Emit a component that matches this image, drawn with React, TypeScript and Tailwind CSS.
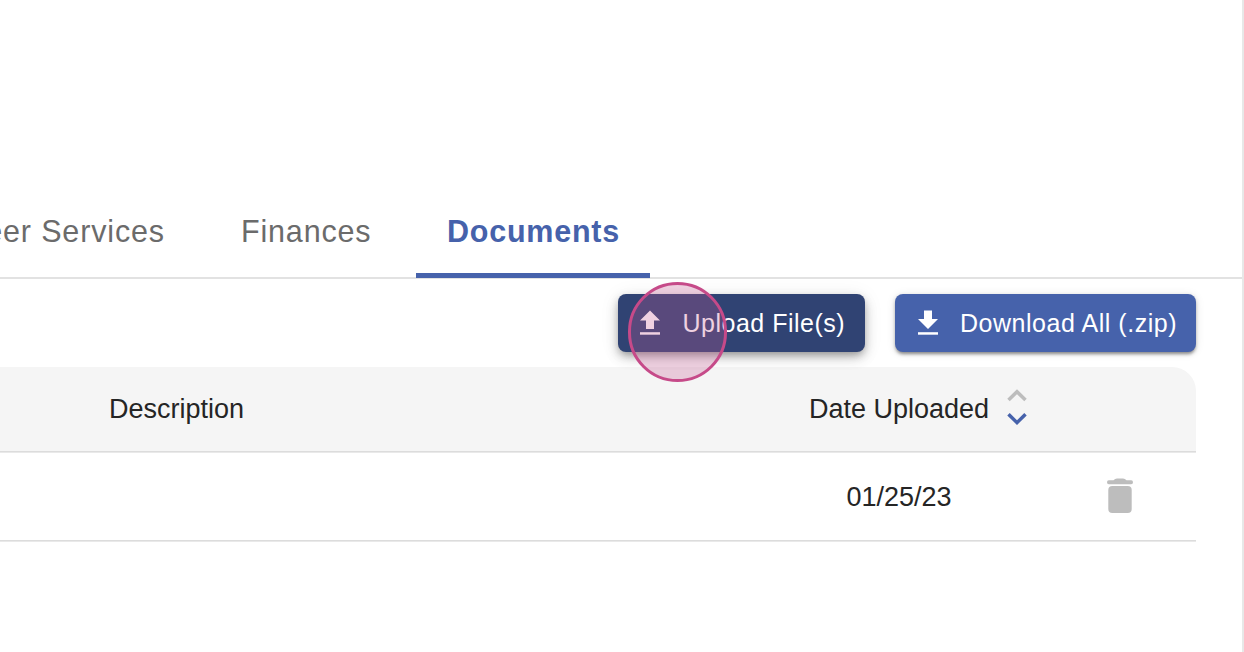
const tabs = [
  { label: "Career Services", active: false },
  { label: "Finances", active: false },
  { label: "Documents", active: true },
];

function Tabs() {
  return (
    <nav className="flex h-[279px] w-full items-end justify-start border-b-2 border-[#e2e2e2]">
      <div className="-ml-[104.5px] flex h-[92px] shrink-0">
        {tabs.map((tab) => (
          <button
            key={tab.label}
            className={
              tab.active
                ? "-mb-px ml-[7px] flex h-[92.5px] w-[234px] shrink-0 items-center justify-center whitespace-nowrap border-b-[5px] border-[#4662ab] pt-[4px] text-[30.5px] font-bold leading-none tracking-[0.75px] text-[#4662ab]"
                : "flex shrink-0 items-center whitespace-nowrap px-[38px] pt-[1px] text-[30.5px] leading-none tracking-[0.85px] text-[#6b6b6b]"
            }
          >
            {tab.label}
          </button>
        ))}
      </div>
    </nav>
  );
}

function TransferIcon({ up }: { up: boolean }) {
  return (
    <svg viewBox="0 0 20 25" className="-mt-[2px] h-[25px] w-5 shrink-0" fill="currentColor">
      <path d={up ? "M6 19V10.5H0L10 0.5L20 10.5H14V19Z" : "M6 0.5V9H0L10 19L20 9H14V0.5Z"} />
      <path d="M0 22.2H20V24.7H0Z" />
    </svg>
  );
}

function Actions() {
  return (
    <div className="flex h-[88px] items-start justify-end gap-[30px] pr-[46px] pt-[15px]">
      <button className="relative flex h-[58px] w-[247px] items-center gap-[22.5px] whitespace-nowrap rounded-[8px] bg-[#304373] pl-[22px] text-[25px] leading-none tracking-[0.5px] text-white shadow-[0_4px_8px_-2px_rgba(0,0,0,0.35),0_6px_14px_rgba(0,0,0,0.14),0_2px_20px_rgba(0,0,0,0.08)]">
        <TransferIcon up />
        <span>Upload File(s)</span>
        <span className="absolute -top-[12px] left-[10px] h-[100px] w-[99px] rounded-full border-[3px] border-[#c64a89] bg-[#c65a95]/28" />
      </button>
      <button className="flex h-[58px] w-[301px] items-center gap-[22px] whitespace-nowrap rounded-[8px] bg-[#4662ab] pl-[23px] text-[25px] leading-none tracking-[0.53px] text-white shadow-[0_3px_3px_-1px_rgba(0,0,0,0.3),0_2px_4px_rgba(0,0,0,0.18),0_1px_10px_rgba(0,0,0,0.1)]">
        <TransferIcon up={false} />
        <span>Download All (.zip)</span>
      </button>
    </div>
  );
}

function SortIcon() {
  return (
    <svg viewBox="0 0 20 38" className="-mt-[5px] ml-[18px] h-[38px] w-5" fill="none" strokeWidth="3.5">
      <path d="M1.5 12L10 3.7L18.5 12" stroke="#bdbdbd" />
      <path d="M1.5 26.3L10 34.6L18.5 26.3" stroke="#4662ab" />
    </svg>
  );
}

function TrashIcon() {
  return (
    <svg viewBox="0 0 28 36" className="-mt-[1px] h-9 w-7" fill="#bdbdbd">
      <path d="M7.5 2.2Q9 0.6 11 0.6H17Q19 0.6 20.5 2.2H25.2Q27 2.2 27 4.2T25.2 6.2H2.8Q1 6.2 1 4.2T2.8 2.2Z" />
      <rect x="2.3" y="8" width="23.4" height="27" rx="4" />
    </svg>
  );
}

function Documents() {
  return (
    <section className="mr-[46px] text-[27px] leading-none text-[#252525]">
      <div className="flex h-[85px] items-center rounded-tr-[24px] bg-[#f5f5f5]">
        <span className="w-[701px] shrink-0 pb-px pl-[109px]">Description</span>
        <span className="flex items-center whitespace-nowrap pb-px pl-[108px]">
          Date Uploaded
          <SortIcon />
        </span>
      </div>
      <div className="-mt-px flex h-[90px] items-center border-y border-[#dcdcdc] shadow-[0_1px_0_#e9e9e9,inset_0_1px_0_#e9e9e9]">
        <span className="w-[1106px] shrink-0 pl-[846.5px] pt-[2px]">01/25/23</span>
        <TrashIcon />
      </div>
    </section>
  );
}

export default function App() {
  return (
    <main className="h-[652px] w-[1244px] overflow-hidden border-r-2 border-[#e8e8e8] bg-white font-['Liberation_Sans',Arial,sans-serif]">
      <Tabs />
      <Actions />
      <Documents />
    </main>
  );
}
